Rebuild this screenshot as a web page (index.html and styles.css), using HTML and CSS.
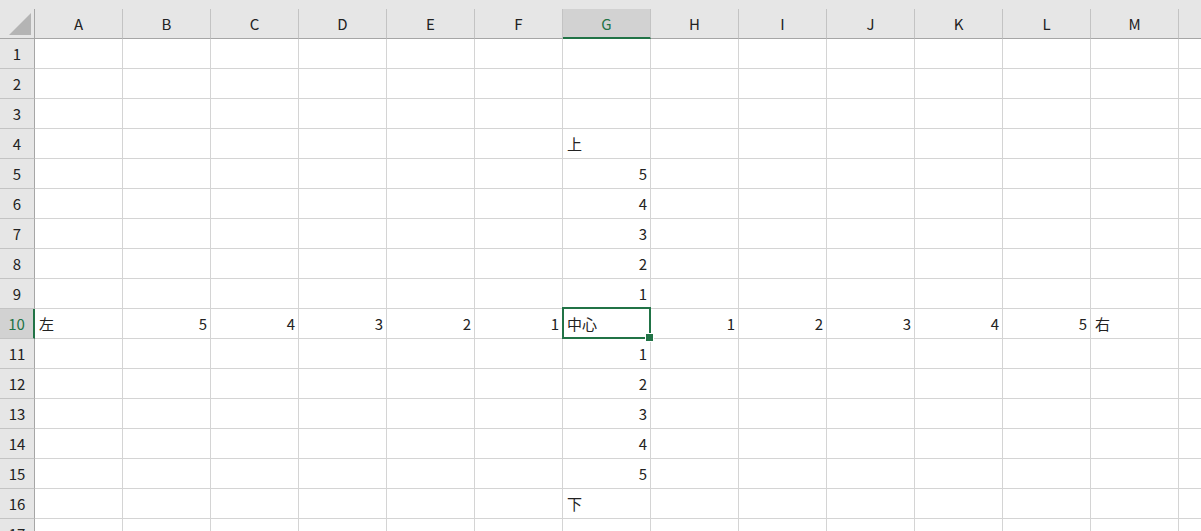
FILE: index.html
```html
<!DOCTYPE html>
<html lang="ja">
  <head>
    <meta charset="UTF-8" />
    <meta name="viewport" content="width=device-width, initial-scale=1.0" />
    <title>Sheet1</title>
    <link rel="stylesheet" href="styles.css">
  </head>
  <body>
    <div class="sheet">
      <div class="row head">
        <div class="corner"><span class="tri"></span></div>
        <div class="col">A</div><div class="col">B</div><div class="col">C</div><div class="col">D</div>
        <div class="col">E</div><div class="col">F</div><div class="col sel">G</div><div class="col">H</div>
        <div class="col">I</div><div class="col">J</div><div class="col">K</div><div class="col">L</div>
        <div class="col">M</div><div class="col"></div>
      </div>

      <div class="row"><div class="rh">1</div><div class="c"></div><div class="c"></div><div class="c"></div><div class="c"></div><div class="c"></div><div class="c"></div><div class="c"></div><div class="c"></div><div class="c"></div><div class="c"></div><div class="c"></div><div class="c"></div><div class="c"></div><div class="c"></div></div>
      <div class="row"><div class="rh">2</div><div class="c"></div><div class="c"></div><div class="c"></div><div class="c"></div><div class="c"></div><div class="c"></div><div class="c"></div><div class="c"></div><div class="c"></div><div class="c"></div><div class="c"></div><div class="c"></div><div class="c"></div><div class="c"></div></div>
      <div class="row"><div class="rh">3</div><div class="c"></div><div class="c"></div><div class="c"></div><div class="c"></div><div class="c"></div><div class="c"></div><div class="c"></div><div class="c"></div><div class="c"></div><div class="c"></div><div class="c"></div><div class="c"></div><div class="c"></div><div class="c"></div></div>
      <div class="row"><div class="rh">4</div><div class="c"></div><div class="c"></div><div class="c"></div><div class="c"></div><div class="c"></div><div class="c"></div><div class="c">上</div><div class="c"></div><div class="c"></div><div class="c"></div><div class="c"></div><div class="c"></div><div class="c"></div><div class="c"></div></div>
      <div class="row"><div class="rh">5</div><div class="c"></div><div class="c"></div><div class="c"></div><div class="c"></div><div class="c"></div><div class="c"></div><div class="c num">5</div><div class="c"></div><div class="c"></div><div class="c"></div><div class="c"></div><div class="c"></div><div class="c"></div><div class="c"></div></div>
      <div class="row"><div class="rh">6</div><div class="c"></div><div class="c"></div><div class="c"></div><div class="c"></div><div class="c"></div><div class="c"></div><div class="c num">4</div><div class="c"></div><div class="c"></div><div class="c"></div><div class="c"></div><div class="c"></div><div class="c"></div><div class="c"></div></div>
      <div class="row"><div class="rh">7</div><div class="c"></div><div class="c"></div><div class="c"></div><div class="c"></div><div class="c"></div><div class="c"></div><div class="c num">3</div><div class="c"></div><div class="c"></div><div class="c"></div><div class="c"></div><div class="c"></div><div class="c"></div><div class="c"></div></div>
      <div class="row"><div class="rh">8</div><div class="c"></div><div class="c"></div><div class="c"></div><div class="c"></div><div class="c"></div><div class="c"></div><div class="c num">2</div><div class="c"></div><div class="c"></div><div class="c"></div><div class="c"></div><div class="c"></div><div class="c"></div><div class="c"></div></div>
      <div class="row"><div class="rh">9</div><div class="c"></div><div class="c"></div><div class="c"></div><div class="c"></div><div class="c"></div><div class="c"></div><div class="c num">1</div><div class="c"></div><div class="c"></div><div class="c"></div><div class="c"></div><div class="c"></div><div class="c"></div><div class="c"></div></div>
      <div class="row"><div class="rh sel">10</div><div class="c">左</div><div class="c num">5</div><div class="c num">4</div><div class="c num">3</div><div class="c num">2</div><div class="c num">1</div><div class="c active">中心</div><div class="c num">1</div><div class="c num">2</div><div class="c num">3</div><div class="c num">4</div><div class="c num">5</div><div class="c">右</div><div class="c"></div></div>
      <div class="row"><div class="rh">11</div><div class="c"></div><div class="c"></div><div class="c"></div><div class="c"></div><div class="c"></div><div class="c"></div><div class="c num">1</div><div class="c"></div><div class="c"></div><div class="c"></div><div class="c"></div><div class="c"></div><div class="c"></div><div class="c"></div></div>
      <div class="row"><div class="rh">12</div><div class="c"></div><div class="c"></div><div class="c"></div><div class="c"></div><div class="c"></div><div class="c"></div><div class="c num">2</div><div class="c"></div><div class="c"></div><div class="c"></div><div class="c"></div><div class="c"></div><div class="c"></div><div class="c"></div></div>
      <div class="row"><div class="rh">13</div><div class="c"></div><div class="c"></div><div class="c"></div><div class="c"></div><div class="c"></div><div class="c"></div><div class="c num">3</div><div class="c"></div><div class="c"></div><div class="c"></div><div class="c"></div><div class="c"></div><div class="c"></div><div class="c"></div></div>
      <div class="row"><div class="rh">14</div><div class="c"></div><div class="c"></div><div class="c"></div><div class="c"></div><div class="c"></div><div class="c"></div><div class="c num">4</div><div class="c"></div><div class="c"></div><div class="c"></div><div class="c"></div><div class="c"></div><div class="c"></div><div class="c"></div></div>
      <div class="row"><div class="rh">15</div><div class="c"></div><div class="c"></div><div class="c"></div><div class="c"></div><div class="c"></div><div class="c"></div><div class="c num">5</div><div class="c"></div><div class="c"></div><div class="c"></div><div class="c"></div><div class="c"></div><div class="c"></div><div class="c"></div></div>
      <div class="row"><div class="rh">16</div><div class="c"></div><div class="c"></div><div class="c"></div><div class="c"></div><div class="c"></div><div class="c"></div><div class="c">下</div><div class="c"></div><div class="c"></div><div class="c"></div><div class="c"></div><div class="c"></div><div class="c"></div><div class="c"></div></div>
      <div class="row"><div class="rh">17</div><div class="c"></div><div class="c"></div><div class="c"></div><div class="c"></div><div class="c"></div><div class="c"></div><div class="c"></div><div class="c"></div><div class="c"></div><div class="c"></div><div class="c"></div><div class="c"></div><div class="c"></div><div class="c"></div></div>
    </div>
  </body>
</html>
```

FILE: styles.css
```css
* {
  padding: 0;
  margin: 0;
  box-sizing: border-box;
}
body {
  width: 1201px;
  height: 531px;
  overflow: hidden;
  background: #fff;
  color: #222;
  font-family: "Noto Sans CJK JP", "Noto Sans", sans-serif;
  font-size: 15px;
}
.sheet {
  display: flex;
  flex-direction: column;
}
.row {
  display: flex;
  flex: none;
  height: 30px;
}

/* column headers */
.head {
  height: 39px;
  background: #e6e6e6;
}
.corner {
  flex: none;
  width: 35px;
  margin-top: 9px;
  padding: 4px 0 0 9px;
  border-right: 1px solid #a6a6a6;
  border-bottom: 1px solid #a6a6a6;
}
.tri {
  display: block;
  width: 22px;
  height: 22px;
  background: #b4b4b4;
  clip-path: polygon(100% 0, 100% 100%, 0 100%);
}
.col {
  flex: none;
  width: 88px;
  margin-top: 9px;
  display: flex;
  align-items: center;
  justify-content: center;
  border-right: 1px solid #c3c3c3;
  border-bottom: 1px solid #a6a6a6;
}
.col.sel {
  background: #d2d2d2;
  color: #217346;
  border-bottom: 2px solid #217346;
}

/* row headers */
.rh {
  flex: none;
  width: 35px;
  display: flex;
  align-items: center;
  justify-content: center;
  background: #e6e6e6;
  border-right: 1px solid #a6a6a6;
  border-bottom: 1px solid #c3c3c3;
}
.rh.sel {
  background: #d2d2d2;
  color: #217346;
  border-right: 2px solid #217346;
}

/* cells */
.c {
  flex: none;
  width: 88px;
  display: flex;
  align-items: center;
  padding: 0 3px 1px 4px;
  white-space: nowrap;
  border-right: 1px solid #d4d4d4;
  border-bottom: 1px solid #d4d4d4;
}
.c.num {
  justify-content: flex-end;
}
.c.active {
  position: relative;
}
.c.active::before {
  content: "";
  position: absolute;
  top: -2px;
  left: -1px;
  right: -1px;
  bottom: -1px;
  border: 2px solid #217346;
}
.c.active::after {
  content: "";
  position: absolute;
  right: -4px;
  bottom: -4px;
  width: 7px;
  height: 7px;
  background: #217346;
  border: 1px solid #fff;
}
```
